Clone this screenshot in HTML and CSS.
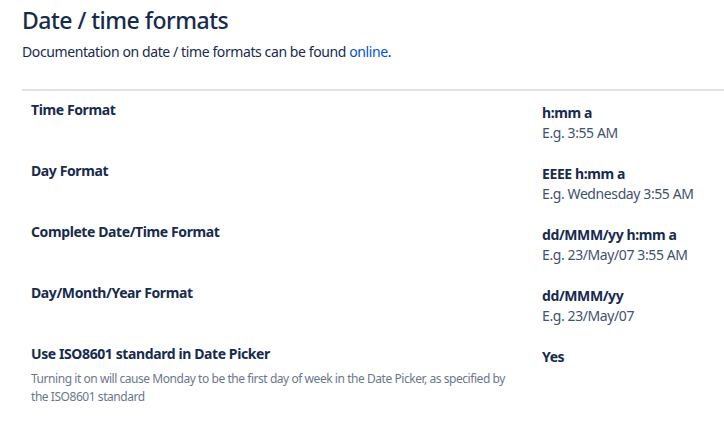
FILE: index.html
```html
<!DOCTYPE html>
<html>
<head>
<meta charset="utf-8">
<link rel="stylesheet" href="styles.css">
</head>
<body>
<div class="page">
  <h2 class="title">Date / time formats</h2>
  <p class="intro">Documentation on date / time formats can be found <a href="#" class="link">online</a>.</p>
  <div class="settings">
    <div class="row">
      <div class="label">Time Format</div>
      <div class="value"><div class="fmt">h:mm a</div><div class="example">E.g. 3:55 AM</div></div>
    </div>
    <div class="row">
      <div class="label">Day Format</div>
      <div class="value"><div class="fmt">EEEE h:mm a</div><div class="example">E.g. Wednesday 3:55 AM</div></div>
    </div>
    <div class="row">
      <div class="label">Complete Date/Time Format</div>
      <div class="value"><div class="fmt">dd/MMM/yy h:mm a</div><div class="example">E.g. 23/May/07 3:55 AM</div></div>
    </div>
    <div class="row">
      <div class="label">Day/Month/Year Format</div>
      <div class="value"><div class="fmt">dd/MMM/yy</div><div class="example">E.g. 23/May/07</div></div>
    </div>
    <div class="row">
      <div class="label">Use ISO8601 standard in Date Picker
        <div class="desc">Turning it on will cause Monday to be the first day of week in the Date Picker, as specified by the ISO8601 standard</div>
      </div>
      <div class="value"><div class="fmt">Yes</div></div>
    </div>
  </div>
</div>
</body>
</html>
```
FILE: styles.css
```css
html, body {
  margin: 0;
  padding: 0;
  background: #fff;
}
body {
  font-family: "Noto Sans", "Open Sans", sans-serif;
  color: #172b4d;
  font-size: 14px;
  line-height: 20px;
  letter-spacing: -0.4px;
}
.page {
  padding: 0 0 0 22px;
}
.title {
  margin: 0;
  padding-top: 5px;
  font-size: 23px;
  line-height: 30px;
  font-weight: 500;
  letter-spacing: -0.5px;
  color: #172b4d;
}
.intro {
  margin: 7px 0 0 0;
  font-size: 14px;
  line-height: 20px;
}
.link {
  color: #0052cc;
  text-decoration: none;
}
.settings {
  margin-top: 27px;
  border-top: 2px solid #dfe1e6;
  padding-top: 9px;
}
.row {
  display: grid;
  grid-template-columns: 511px 1fr;
  padding-left: 9px;
  min-height: 61px;
}
.label {
  font-weight: 700;
  color: #172b4d;
}
.value {
  padding-top: 3px;
}
.fmt {
  font-weight: 700;
}
.example {
  color: #42526e;
}
.desc {
  font-weight: 400;
  font-size: 12px;
  line-height: 18px;
  letter-spacing: -0.45px;
  color: #6b778c;
  margin-top: 6px;
  max-width: 490px;
}
```
